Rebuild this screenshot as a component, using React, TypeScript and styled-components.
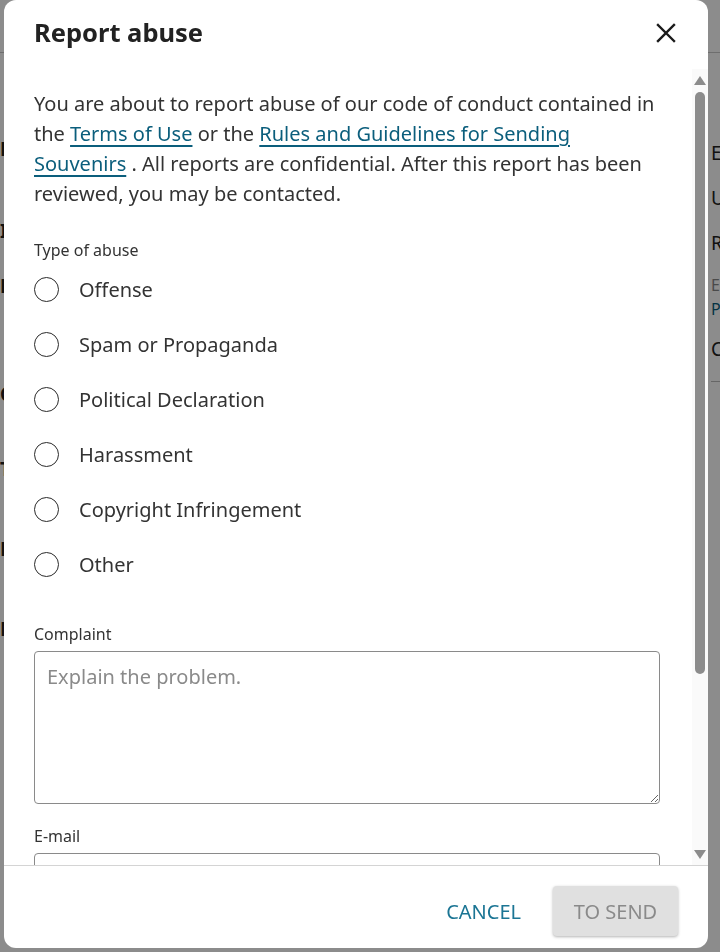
import { useLayoutEffect, useRef, useState } from "react";
import { createGlobalStyle, styled } from "styled-components";

const GlobalStyle = createGlobalStyle`
  html, body {
    margin: 0;
    padding: 0;
    height: 100%;
    overflow: hidden;
    font-family: "Noto Sans", "Open Sans", "Liberation Sans", sans-serif;
    background: #ffffff;
  }
  * {
    box-sizing: border-box;
  }
`;

/** 뒤에 깔린 페이지 (오버레이에 가려짐) */
const Page = styled.div`
  width: 100vw;
  height: 100vh;
  display: flex;
  flex-direction: column;
  color: #222;
`;
const PageHeader = styled.div`
  height: 53px;
  border-bottom: 1px solid #c8c8c8;
  flex-shrink: 0;
`;
const PageMain = styled.div`
  flex: 1;
  display: flex;
`;
const LeftCol = styled.div`
  width: 4px;
  display: flex;
  flex-direction: column;
  align-items: flex-end;
  padding-top: 84px;
  font-size: 20px;
  font-weight: 700;
  direction: rtl;
  white-space: nowrap;
`;
const Middle = styled.div`
  flex: 1;
`;
const RightCol = styled.div`
  width: 9px;
  display: flex;
  flex-direction: column;
  padding-top: 84px;
  white-space: nowrap;
`;
const SideLine = styled.div<{ $tone?: "muted" | "link"; $gap: number }>`
  margin-top: ${(p) => p.$gap}px;
  line-height: 24px;
  color: ${(p) =>
    p.$tone === "muted" ? "#888" : p.$tone === "link" ? "#0b5e7c" : "#222"};
  font-size: ${(p) => (p.$tone ? "16px" : "19px")};
`;
const SideRule = styled.div`
  margin-top: 20px;
  border-top: 1px solid #bbb;
`;

const Backdrop = styled.div`
  position: fixed;
  inset: 0;
  background: rgba(0, 0, 0, 0.45);
`;

/** 모달 */
const Dialog = styled.div`
  position: fixed;
  top: 0;
  left: 4px;
  width: 704px;
  height: 948px;
  background: #fff;
  border-radius: 12px;
  display: flex;
  flex-direction: column;
  overflow: hidden;
  color: #333;
`;
const Header = styled.div`
  height: 69px;
  flex-shrink: 0;
  display: flex;
  justify-content: space-between;
  align-items: flex-start;
  padding: 15px 30px 0 30px;
`;
const Title = styled.h2`
  margin: 0;
  font-size: 25.5px;
  line-height: 34px;
  font-weight: 700;
  color: #222;
`;
const CloseBtn = styled.button`
  width: 24px;
  height: 24px;
  margin-top: 6px;
  padding: 0;
  border: none;
  background: none;
  display: flex;
  align-items: center;
  justify-content: center;
  cursor: pointer;
`;
const BodyWrap = styled.div`
  flex: 1;
  min-height: 0;
  display: flex;
`;
const Body = styled.div`
  flex: 1;
  overflow-y: auto;
  padding: 20px 32px 0 30px;
  scrollbar-width: none;
  &::-webkit-scrollbar {
    display: none;
  }
`;
/** 스크롤바 */
const Rail = styled.div`
  width: 16px;
  flex-shrink: 0;
  background: #fafafa;
  display: flex;
  flex-direction: column;
`;
const RailArrow = styled.div`
  height: 22px;
  flex-shrink: 0;
  display: flex;
  align-items: center;
  justify-content: center;
`;
const RailTrack = styled.div`
  flex: 1;
  position: relative;
`;
const Thumb = styled.div`
  position: absolute;
  left: 3px;
  right: 3px;
  background: #8c8c8c;
  border-radius: 5px;
`;
const Intro = styled.p`
  margin: 0;
  font-size: 20px;
  line-height: 30px;
`;
const Link = styled.a`
  color: #0b5e7c;
  text-decoration: underline;
  text-decoration-thickness: 2px;
  text-underline-offset: 4px;
`;
const FieldLabel = styled.div<{ $top: number }>`
  margin-top: ${(p) => p.$top}px;
  font-size: 16px;
  line-height: 24px;
  color: #333;
`;
const RadioList = styled.div`
  display: flex;
  flex-direction: column;
`;
const RadioRow = styled.label`
  height: 55px;
  display: flex;
  align-items: center;
  gap: 20px;
  cursor: pointer;
`;
const RadioCircle = styled.span<{ $checked: boolean }>`
  width: 25px;
  height: 25px;
  border-radius: 50%;
  border: 1.5px solid #2a2a2a;
  flex-shrink: 0;
  display: flex;
  align-items: center;
  justify-content: center;
  &::after {
    content: "";
    width: 13px;
    height: 13px;
    border-radius: 50%;
    background: ${(p) => (p.$checked ? "#0b5e7c" : "transparent")};
  }
`;
const RadioText = styled.span`
  font-size: 20px;
  line-height: 28px;
  color: #333;
`;
const TextArea = styled.textarea`
  display: block;
  width: 100%;
  height: 153px;
  margin-top: 5px;
  padding: 12px 12px;
  border: 1px solid #8a8a8a;
  border-radius: 4px;
  font-family: inherit;
  font-size: 20px;
  line-height: 26px;
  color: #333;
  resize: vertical;
  &::placeholder {
    color: #8a8a8a;
  }
  &:focus {
    outline: none;
  }
`;
const Input = styled.input`
  display: block;
  width: 100%;
  height: 50px;
  margin-top: 5px;
  padding: 0 12px;
  border: 1px solid #8a8a8a;
  border-radius: 4px;
  font-family: inherit;
  font-size: 20px;
  color: #333;
  &:focus {
    outline: none;
  }
`;
const BodyEnd = styled.div`
  height: 92px;
`;
const Footer = styled.div`
  height: 83px;
  flex-shrink: 0;
  border-top: 1px solid #d4d4d4;
  display: flex;
  align-items: flex-start;
  justify-content: flex-end;
  gap: 16px;
  padding: 20px 30px 0 30px;
`;
const TextBtn = styled.button`
  height: 50px;
  padding: 0 16px;
  border: none;
  background: none;
  font-family: inherit;
  font-size: 20px;
  color: #1b7594;
  text-transform: uppercase;
  cursor: pointer;
`;
const SendBtn = styled.button`
  width: 125px;
  height: 50px;
  border: none;
  border-radius: 4px;
  background: #e0e0e0;
  box-shadow: 0 1px 3px rgba(0, 0, 0, 0.3);
  font-family: inherit;
  font-size: 20px;
  color: #8a8a8a;
  text-transform: uppercase;
  cursor: default;
`;

const TYPES = [
  "Offense",
  "Spam or Propaganda",
  "Political Declaration",
  "Harassment",
  "Copyright Infringement",
  "Other",
];

const LEFT_MARKS = [
  { text: "Links", gap: 0 },
  { text: "Items", gap: 58 },
  { text: "Posts", gap: 31 },
  { text: "Cards", gap: 84 },
  { text: "Tags", gap: 51 },
  { text: "Files", gap: 56 },
  { text: "Notes", gap: 56 },
];

function App() {
  const [type, setType] = useState<string | null>(null);
  const [complaint, setComplaint] = useState("");
  const bodyRef = useRef<HTMLDivElement>(null);
  const trackRef = useRef<HTMLDivElement>(null);
  const [thumb, setThumb] = useState({ top: 1, height: 580 });

  /** 스크롤 위치로 thumb 계산 */
  const updateThumb = () => {
    const el = bodyRef.current;
    const track = trackRef.current;
    if (!el || !track) return;
    const len = track.clientHeight;
    const ratio = el.clientHeight / el.scrollHeight;
    const height = Math.max(30, len * ratio);
    const max = el.scrollHeight - el.clientHeight;
    const top = max > 0 ? (el.scrollTop / max) * (len - height) : 0;
    setThumb({ top: top + 1, height: height - 2 });
  };

  useLayoutEffect(() => {
    updateThumb();
  }, []);

  return (
    <>
      <GlobalStyle />
      <Page>
        <PageHeader />
        <PageMain>
          <LeftCol>
            {LEFT_MARKS.map((m) => (
              <SideLine key={m.text} $gap={m.gap}>
                {m.text}
              </SideLine>
            ))}
          </LeftCol>
          <Middle />
          <RightCol>
            <SideLine $gap={4}>Edit</SideLine>
            <SideLine $gap={21}>Upload</SideLine>
            <SideLine $gap={21}>Report</SideLine>
            <SideLine $gap={18} $tone="muted">Embed</SideLine>
            <SideLine $gap={0} $tone="link">Preview</SideLine>
            <SideLine $gap={16}>Copy</SideLine>
            <SideRule />
          </RightCol>
        </PageMain>
      </Page>
      <Backdrop />
      <Dialog role="dialog">
        <Header>
          <Title>Report abuse</Title>
          <CloseBtn aria-label="close">
            <svg width="20" height="20" viewBox="0 0 20 20">
              <path
                d="M2 2 L18 18 M18 2 L2 18"
                stroke="#1a1a1a"
                strokeWidth="2.4"
                strokeLinecap="square"
              />
            </svg>
          </CloseBtn>
        </Header>
        <BodyWrap>
          <Body ref={bodyRef} onScroll={updateThumb}>
            <Intro>
              You are about to report abuse of our code of conduct contained in
              the <Link href="#">Terms of Use</Link> or the{" "}
              <Link href="#">Rules and Guidelines for Sending Souvenirs</Link> .
              All reports are confidential. After this report has been
              reviewed, you may be contacted.
            </Intro>
            <FieldLabel $top={29}>Type of abuse</FieldLabel>
            <RadioList>
              {TYPES.map((t) => (
                <RadioRow key={t} onClick={() => setType(t)}>
                  <RadioCircle $checked={type === t} />
                  <RadioText>{t}</RadioText>
                </RadioRow>
              ))}
            </RadioList>
            <FieldLabel $top={30}>Complaint</FieldLabel>
            <TextArea
              placeholder="Explain the problem."
              value={complaint}
              onChange={(e) => setComplaint(e.target.value)}
            />
            <FieldLabel $top={20}>E-mail</FieldLabel>
            <Input type="email" />
            <FieldLabel $top={20}>Name</FieldLabel>
            <Input type="text" />
            <BodyEnd />
          </Body>
          <Rail>
            <RailArrow>
              <svg width="12" height="9" viewBox="0 0 12 9">
                <path d="M6 0 L12 9 L0 9 Z" fill="#8c8c8c" />
              </svg>
            </RailArrow>
            <RailTrack ref={trackRef}>
              <Thumb style={{ top: thumb.top, height: thumb.height }} />
            </RailTrack>
            <RailArrow>
              <svg width="12" height="9" viewBox="0 0 12 9">
                <path d="M0 0 L12 0 L6 9 Z" fill="#8c8c8c" />
              </svg>
            </RailArrow>
          </Rail>
        </BodyWrap>
        <Footer>
          <TextBtn>Cancel</TextBtn>
          <SendBtn disabled>To send</SendBtn>
        </Footer>
      </Dialog>
    </>
  );
}

export default App;
